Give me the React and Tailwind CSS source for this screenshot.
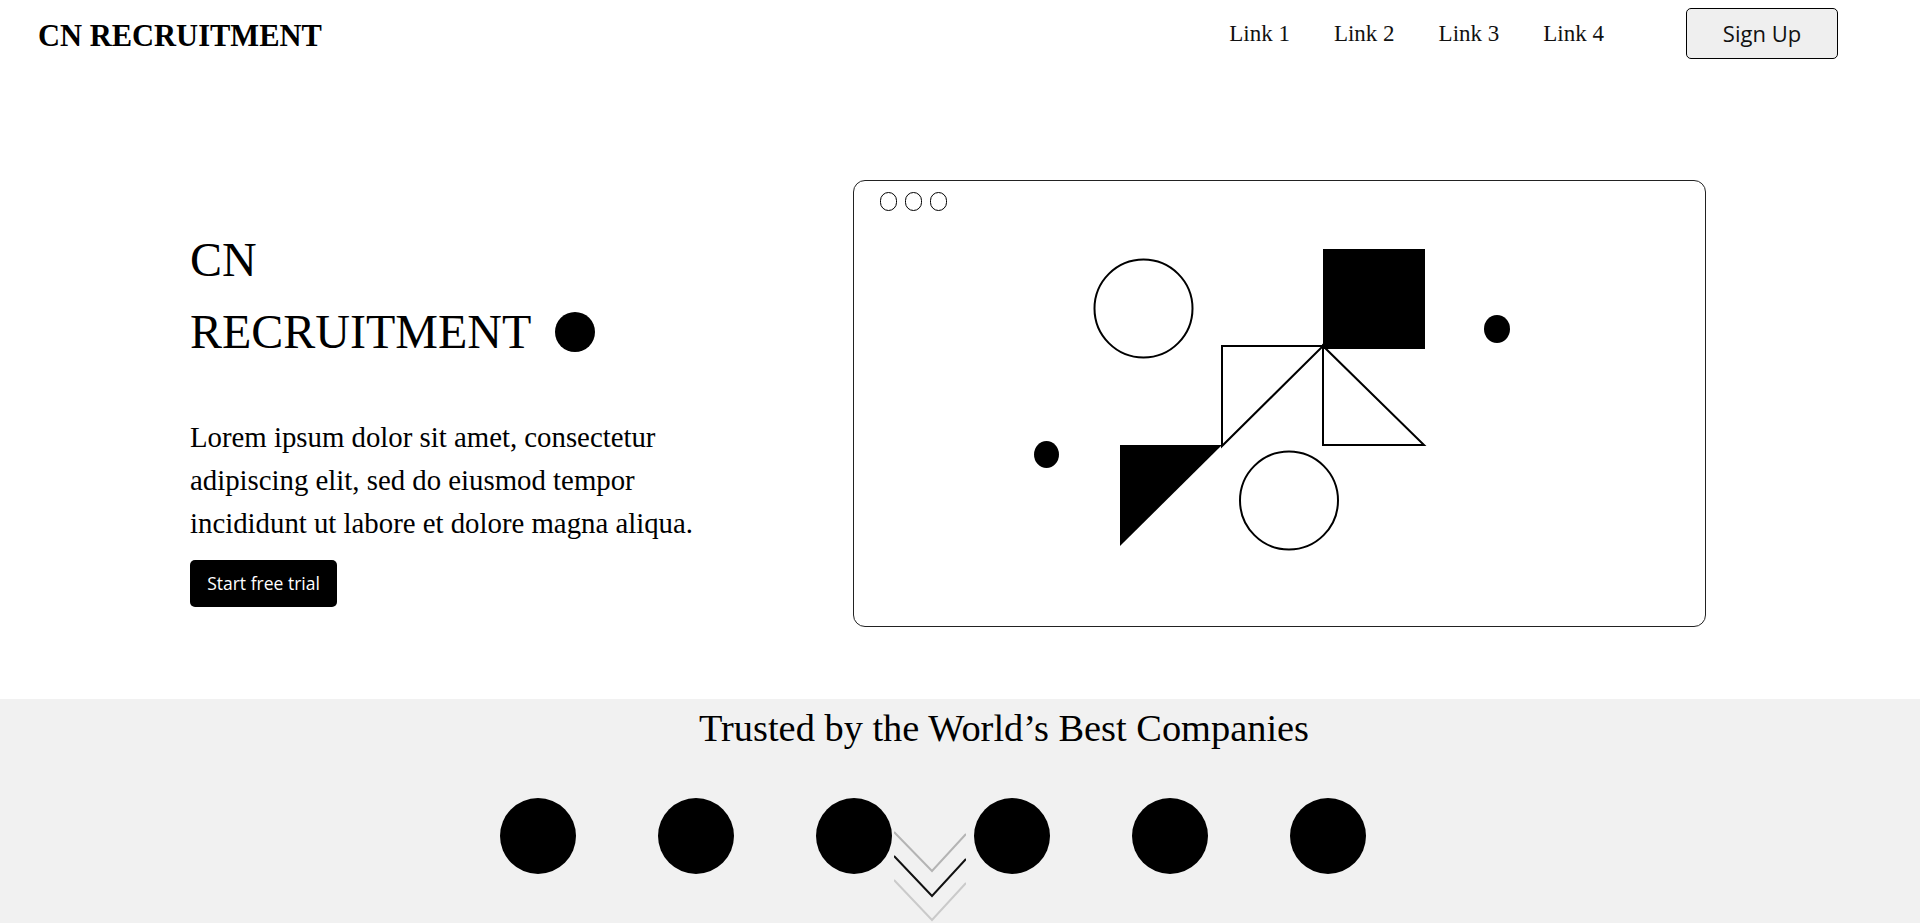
import React from "react";

const links = ["Link 1", "Link 2", "Link 3", "Link 4"];
const logos = [1, 2, 3, 4, 5, 6];

function Illustration() {
  return (
    <svg className="absolute inset-0" width="853" height="447" viewBox="0 0 853 447">
      <circle cx="289.5" cy="127.5" r="49" fill="none" stroke="#000" strokeWidth="2" />
      <rect x="469" y="68" width="102" height="100" fill="#000" />
      <polygon points="368,165 469,165 368,265" fill="none" stroke="#000" strokeWidth="2" />
      <polygon points="469,165 469,264 570,264" fill="none" stroke="#000" strokeWidth="2" />
      <polygon points="266,264 368,264 266,365" fill="#000" />
      <circle cx="435" cy="319.5" r="49" fill="none" stroke="#000" strokeWidth="2" />
      <ellipse cx="192.5" cy="273.5" rx="12.5" ry="13.5" fill="#000" />
      <ellipse cx="643" cy="148" rx="13" ry="14" fill="#000" />
    </svg>
  );
}

function ScrollHint() {
  return (
    <svg className="absolute left-[894px] top-[131px]" width="72" height="100" viewBox="0 0 72 100">
      <polyline points="0,2 38,41 72,4" fill="none" stroke="#b4b4b4" strokeWidth="2" />
      <polyline points="0,26 38,66 72,29" fill="none" stroke="#111" strokeWidth="2" />
      <polyline points="0,50 38,90 72,53" fill="none" stroke="#cacaca" strokeWidth="2" />
    </svg>
  );
}

export default function App() {
  return (
    <div className="min-h-screen bg-white text-black font-['Liberation_Serif',serif]">
      {/* Header */}
      <header className="flex items-start justify-between h-[67px] pl-[38px] pr-[82px]">
        <div className="mt-[21px] text-[30.5px] font-bold leading-none">CN RECRUITMENT</div>
        <div className="flex items-start">
          <nav className="mt-[22px] flex gap-[44px] text-[23px] leading-none text-[#111]">
            {links.map((l) => (
              <a key={l} href="#" className="whitespace-nowrap">
                {l}
              </a>
            ))}
          </nav>
          <button className="ml-[82px] mt-[8px] w-[152px] h-[51px] rounded-[5px] border border-black bg-[#efefef] text-[22px] text-[#111] font-['Open_Sans',sans-serif]">
            Sign Up
          </button>
        </div>
      </header>

      {/* Hero */}
      <section className="flex items-start pl-[190px] pt-[113px] pb-[72px]">
        <div className="w-[530px] mt-[44px]">
          <h1 className="text-[48px] leading-[72px] font-normal">
            <div>CN</div>
            <div className="flex items-center gap-[24px]">
              <span>RECRUITMENT</span>
              <span className="w-[40px] h-[40px] rounded-full bg-black"></span>
            </div>
          </h1>
          <p className="mt-[48px] text-[28.8px] leading-[1.5]">
            Lorem ipsum dolor sit amet, consectetur adipiscing elit, sed do eiusmod tempor incididunt ut labore et
            dolore magna aliqua.
          </p>
          <button className="mt-[14px] w-[147px] h-[47px] rounded-[5px] bg-black text-white text-[17.5px] font-['Open_Sans',sans-serif]">
            Start free trial
          </button>
        </div>

        <div className="relative ml-[133px] w-[853px] h-[447px] shrink-0 rounded-[12px] border border-[#222]">
          <div className="flex gap-[8px] pl-[26px] pt-[11px]">
            <span className="w-[17px] h-[19px] rounded-full border border-black"></span>
            <span className="w-[17px] h-[19px] rounded-full border border-black"></span>
            <span className="w-[17px] h-[19px] rounded-full border border-black"></span>
          </div>
          <Illustration />
        </div>
      </section>

      {/* Trusted by */}
      <section className="relative h-[420px] bg-[#f1f1f1] pt-[10px]">
        <h2 className="pl-[88px] text-center text-[38.4px] leading-none font-normal">
          Trusted by the World’s Best Companies
        </h2>
        <div className="mt-[51px] flex gap-[82px] pl-[500px]">
          {logos.map((i) => (
            <span key={i} className="w-[76px] h-[76px] rounded-full bg-black"></span>
          ))}
        </div>
        <ScrollHint />
      </section>
    </div>
  );
}
